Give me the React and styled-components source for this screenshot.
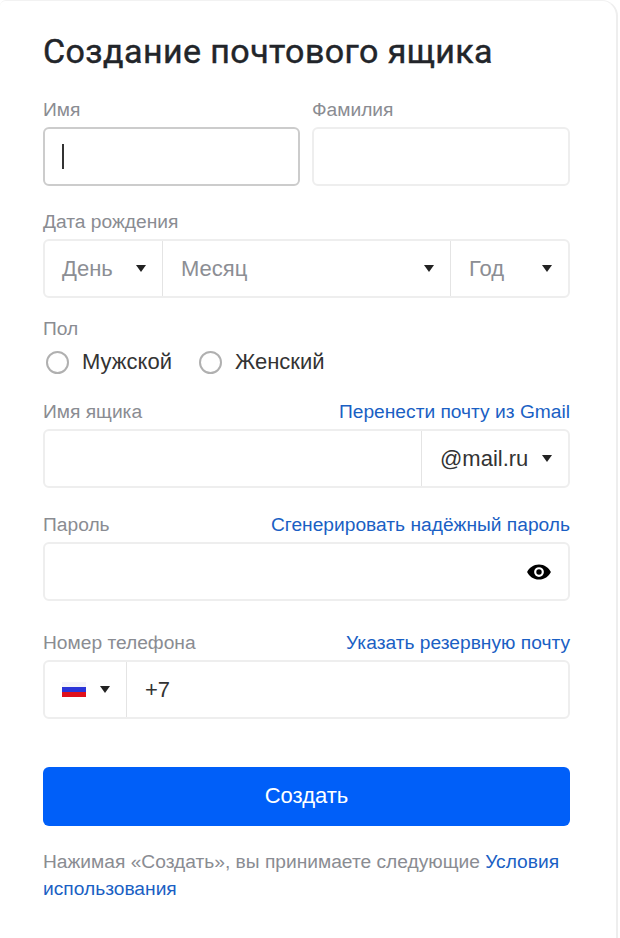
import React from "react";
import styled, { createGlobalStyle } from "styled-components";

const GlobalStyle = createGlobalStyle`
  html, body {
    margin: 0;
    padding: 0;
    background: #fff;
  }
  body {
    font-family: "Liberation Sans", Arial, sans-serif;
  }
`;

const Card = styled.div`
  box-sizing: border-box;
  width: 618px;
  height: 938px;
  padding: 29px 46px 0 43px;
  background: #fff;
  border-right: 2px solid #eeeeee;
  border-top: 1px solid #f2f2f2;
  border-top-right-radius: 16px;
  border-top-left-radius: 6px;
`;

const Title = styled.h1`
  margin: 0 0 26px;
  font-family: Roboto, sans-serif;
  font-size: 34px;
  line-height: 42px;
  font-weight: 400;
  color: #22252a;
  letter-spacing: 0.42px;
  -webkit-text-stroke: 0.45px #22252a;
`;

const Row = styled.div`
  display: grid;
  grid-template-columns: 257px 258px;
  column-gap: 12px;
`;

const Field = styled.div`
  margin-top: ${(p) => p.$top || 0}px;
`;

const LabelRow = styled.div`
  display: flex;
  justify-content: space-between;
  align-items: center;
  height: 24px;
  margin-bottom: ${(p) => p.$gap ?? 5}px;
`;

const Label = styled.span`
  font-size: 19.2px;
  color: #8a8c92;
`;

const Link = styled.a`
  font-size: 19.2px;
  color: #1a5fc4;
  text-decoration: none;
`;

const Box = styled.div`
  box-sizing: border-box;
  display: flex;
  align-items: center;
  height: 59px;
  background: #fff;
  border: 2px solid ${(p) => (p.$focused ? "#cccccc" : "#eeeeee")};
  border-radius: 6px;
  overflow: hidden;
`;

const Caret = styled.span`
  width: 2px;
  height: 25px;
  margin-left: 17px;
  background: #333;
`;

const Segment = styled.div`
  box-sizing: border-box;
  display: flex;
  align-items: center;
  justify-content: space-between;
  flex: ${(p) => (p.$width ? `0 0 ${p.$width}px` : 1)};
  height: 100%;
  padding: 0 16px 0 ${(p) => (p.$divided ? 18 : 17)}px;
  border-left: ${(p) => (p.$divided ? "1px solid #e4e4e4" : "none")};
  font-size: 22px;
  color: ${(p) => (p.$value ? "#333" : "#8c8e94")};
`;

const Arrow = styled.i`
  width: 0;
  height: 0;
  border-left: 5px solid transparent;
  border-right: 5px solid transparent;
  border-top: 7px solid #222;
`;

const RadioRow = styled.div`
  display: flex;
  align-items: center;
  height: 30px;
  margin-left: 3px;
  gap: 27px;
`;

const RadioLabel = styled.label`
  display: flex;
  align-items: center;
  gap: 13px;
  font-size: 22px;
  color: #333;
`;

const RadioMark = styled.span`
  box-sizing: border-box;
  width: 23px;
  height: 23px;
  border: 2px solid #b0b0b0;
  border-radius: 50%;
`;

const IconWrap = styled.span`
  display: flex;
  margin-left: auto;
  margin-right: 16px;
`;

const FlagArrow = styled.div`
  display: flex;
  align-items: center;
  gap: 14px;
`;

const Flag = styled.span`
  display: block;
  width: 24px;
  height: 15px;
  background: linear-gradient(#f4f4fa 0 32%, #2b35d8 32% 68%, #e0101c 68% 100%);
`;

const Submit = styled.button`
  display: block;
  width: 527px;
  height: 59px;
  margin-top: 48px;
  padding: 0 0 2px;
  border: none;
  border-radius: 6px;
  background: #005ff9;
  color: #fff;
  font-family: "Liberation Sans", Arial, sans-serif;
  font-size: 22px;
`;

const Terms = styled.p`
  margin: 22px 0 0;
  width: 527px;
  font-size: 19.2px;
  line-height: 27px;
  color: #8a8c92;
`;

function EyeIcon() {
  return (
    <svg width="26" height="26" viewBox="0 0 24 24" fill="#000">
      <path d="M12 5C7 5 2.900 8 1 12c1.900 4 6 7 11 7s9.100-3 11-7c-1.900-4-6-7-11-7zm0 11.500a4.500 4.500 0 1 1 0-9 4.500 4.500 0 0 1 0 9zm0-7a2.500 2.500 0 1 0 0 5 2.500 2.500 0 0 0 0-5z" />
    </svg>
  );
}

export default function App() {
  return (
    <>
      <GlobalStyle />
      <Card>
        <Title>Создание почтового ящика</Title>

        <Row>
          <div>
            <LabelRow>
              <Label>Имя</Label>
            </LabelRow>
            <Box $focused>
              <Caret />
            </Box>
          </div>
          <div>
            <LabelRow>
              <Label>Фамилия</Label>
            </LabelRow>
            <Box />
          </div>
        </Row>

        <Field $top={24}>
          <LabelRow>
            <Label>Дата рождения</Label>
          </LabelRow>
          <Box>
            <Segment $width={117}>
              День <Arrow />
            </Segment>
            <Segment $divided>
              Месяц <Arrow />
            </Segment>
            <Segment $width={118} $divided>
              Год <Arrow />
            </Segment>
          </Box>
        </Field>

        <Field $top={19}>
          <LabelRow $gap={6}>
            <Label>Пол</Label>
          </LabelRow>
          <RadioRow>
            <RadioLabel>
              <RadioMark />
              Мужской
            </RadioLabel>
            <RadioLabel>
              <RadioMark />
              Женский
            </RadioLabel>
          </RadioRow>
        </Field>

        <Field $top={23}>
          <LabelRow>
            <Label>Имя ящика</Label>
            <Link>Перенести почту из Gmail</Link>
          </LabelRow>
          <Box>
            <Segment />
            <Segment $width={147} $divided $value>
              @mail.ru <Arrow />
            </Segment>
          </Box>
        </Field>

        <Field $top={25}>
          <LabelRow>
            <Label>Пароль</Label>
            <Link>Сгенерировать надёжный пароль</Link>
          </LabelRow>
          <Box>
            <IconWrap>
              <EyeIcon />
            </IconWrap>
          </Box>
        </Field>

        <Field $top={30}>
          <LabelRow>
            <Label>Номер телефона</Label>
            <Link>Указать резервную почту</Link>
          </LabelRow>
          <Box>
            <Segment $width={81}>
              <FlagArrow>
                <Flag />
                <Arrow />
              </FlagArrow>
            </Segment>
            <Segment $divided $value>
              +7
            </Segment>
          </Box>
        </Field>

        <Submit>Создать</Submit>

        <Terms>
          Нажимая «Создать», вы принимаете следующие <Link>Условия</Link>{" "}
          <Link>использования</Link>
        </Terms>
      </Card>
    </>
  );
}
